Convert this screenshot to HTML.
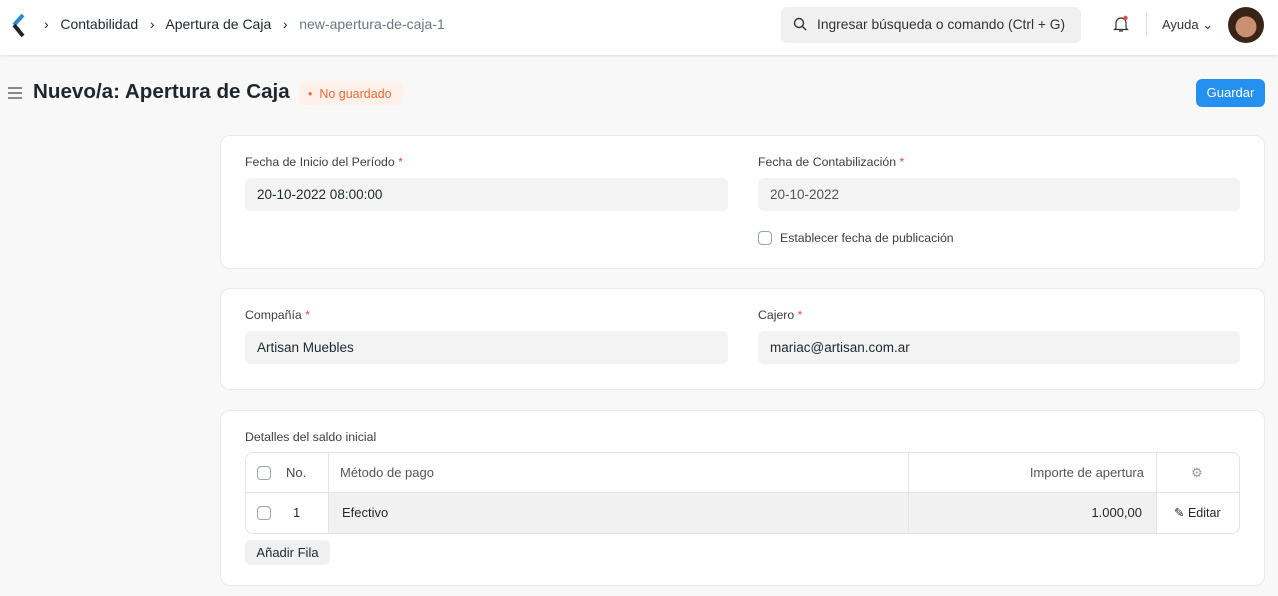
<!DOCTYPE html>
<html><head><meta charset="utf-8"><style>
*{box-sizing:border-box;margin:0;padding:0}
body{width:1278px;height:596px;overflow:hidden;background:#f8f8f8;font-family:"Liberation Sans",sans-serif;color:#1f272e;position:relative;font-size:13px}
.abs{position:absolute}
.nav{left:0;top:0;width:1278px;height:55px;background:#fff;box-shadow:0 1px 3px rgba(0,0,0,.1)}
.card{position:absolute;left:220px;width:1045px;background:#fff;border:1px solid #e8eaec;border-radius:10px}
.lbl{position:absolute;font-size:12.3px;color:#383e44}
.lbl b{color:#e24c4c;font-weight:normal}
.inp{position:absolute;height:33px;background:#f3f3f3;border-radius:6px;font-size:13.5px;padding:9px 12px;color:#1f272e}
.cb{position:absolute;width:14px;height:14px;border:1px solid #9aa2aa;border-radius:4px;background:#fff}
</style></head><body>
<div class="abs nav">
  <svg class="abs" style="left:10px;top:13px" width="16" height="26" viewBox="0 0 16 26"><path d="M13 2 L4 12" stroke="#2b8ad0" stroke-width="4"/><path d="M4 12 L13 23" stroke="#1f272e" stroke-width="4"/></svg>
  <div class="abs" style="left:44px;top:16px;font-size:14px;color:#1f272e">›&nbsp;&nbsp; Contabilidad &nbsp;&nbsp;›&nbsp;&nbsp; Apertura de Caja &nbsp;&nbsp;›&nbsp;&nbsp; <span style="color:#6c7680">new-apertura-de-caja-1</span></div>
  <div class="abs" style="left:781px;top:7px;width:300px;height:36px;background:#f0f0f0;border-radius:6px"></div>
  <svg class="abs" style="left:793px;top:17px" width="14" height="14" viewBox="0 0 14 14"><circle cx="6" cy="6" r="4.5" stroke="#333" stroke-width="1.4" fill="none"/><path d="M9.5 9.5 L13 13" stroke="#333" stroke-width="1.4"/></svg>
  <div class="abs" style="left:817px;top:17px;font-size:13.8px;color:#333">Ingresar búsqueda o comando (Ctrl + G)</div>
  <svg class="abs" style="left:1113px;top:14px" width="16" height="20" viewBox="0 0 16 20"><path d="M3 14 V9 a5 5 0 0 1 10 0 V14 l1.5 1.5 H1.5 Z M6 17 h4" stroke="#333" stroke-width="1.2" fill="none"/><circle cx="12.5" cy="4" r="2.2" fill="#e24c4c"/></svg>
  <div class="abs" style="left:1146px;top:13px;width:1px;height:24px;background:#ddd"></div>
  <div class="abs" style="left:1162px;top:17px;font-size:13px;color:#333">Ayuda ⌄</div>
  <div class="abs" style="left:1228px;top:7px;width:36px;height:36px;border-radius:50%;background:radial-gradient(circle at 50% 55%,#c99072 0 38%,#3a2418 40%)"></div>
</div>
<svg class="abs" style="left:7px;top:86px" width="16" height="14"><path d="M1 2h14M1 7h14M1 12h14" stroke="#666" stroke-width="1.5"/></svg>
<div class="abs" style="left:33px;top:80px;font-size:20.6px;font-weight:bold">Nuevo/a: Apertura de Caja</div>
<div class="abs" style="left:299px;top:82px;width:104px;height:23px;background:#fff1ea;border-radius:6px;color:#ec6a37;font-size:12.5px;padding:5px 0 0 9px">• &nbsp;No guardado</div>
<div class="abs" style="left:1196px;top:79px;width:69px;height:28px;background:#2490ef;border-radius:6px;color:#fff;font-size:13px;text-align:center;line-height:28px">Guardar</div>

<div class="card" style="top:135px;height:134px"></div>
<div class="lbl" style="left:245px;top:155px">Fecha de Inicio del Período <b>*</b></div>
<div class="inp" style="left:245px;top:178px;width:483px">20-10-2022 08:00:00</div>
<div class="lbl" style="left:758px;top:155px">Fecha de Contabilización <b>*</b></div>
<div class="inp" style="left:758px;top:178px;width:482px;color:#555">20-10-2022</div>
<div class="cb" style="left:758px;top:231px"></div>
<div class="lbl" style="left:780px;top:231px">Establecer fecha de publicación</div>

<div class="card" style="top:288px;height:102px"></div>
<div class="lbl" style="left:245px;top:308px">Compañía <b>*</b></div>
<div class="inp" style="left:245px;top:331px;width:483px">Artisan Muebles</div>
<div class="lbl" style="left:758px;top:308px">Cajero <b>*</b></div>
<div class="inp" style="left:758px;top:331px;width:482px">mariac@artisan.com.ar</div>

<div class="card" style="top:410px;height:176px"></div>
<div class="lbl" style="left:245px;top:430px">Detalles del saldo inicial</div>
<div class="abs" style="left:245px;top:452px;width:995px;height:82px;border:1px solid #e2e4e6;border-radius:8px;overflow:hidden">
  <div class="abs" style="left:83px;top:40px;width:580px;height:41px;background:#f1f1f2"></div>
  <div class="abs" style="left:663px;top:40px;width:247px;height:41px;background:#f1f1f2"></div>
  <div class="abs" style="left:0;top:39px;width:995px;height:1px;background:#e2e4e6"></div>
  <div class="abs" style="left:82px;top:0;width:1px;height:82px;background:#e2e4e6"></div>
  <div class="abs" style="left:662px;top:0;width:1px;height:82px;background:#e2e4e6"></div>
  <div class="abs" style="left:910px;top:0;width:1px;height:82px;background:#e2e4e6"></div>
  <div class="cb" style="left:11px;top:13px"></div>
  <div class="abs" style="left:40px;top:12px;color:#444">No.</div>
  <div class="abs" style="left:94px;top:12px;color:#555">Método de pago</div>
  <div class="abs" style="right:95px;top:12px;color:#555">Importe de apertura</div>
  <div class="abs" style="left:945px;top:12px;color:#999">⚙</div>
  <div class="cb" style="left:11px;top:53px"></div>
  <div class="abs" style="left:47px;top:52px">1</div>
  <div class="abs" style="left:96px;top:52px">Efectivo</div>
  <div class="abs" style="right:97px;top:52px">1.000,00</div>
  <div class="abs" style="left:928px;top:52px;font-size:12.5px">✎ Editar</div>
</div>
<div class="abs" style="left:245px;top:540px;width:85px;height:25px;background:#f0f0f0;border-radius:6px;font-size:13px;text-align:center;line-height:25px">Añadir Fila</div>
</body></html>
